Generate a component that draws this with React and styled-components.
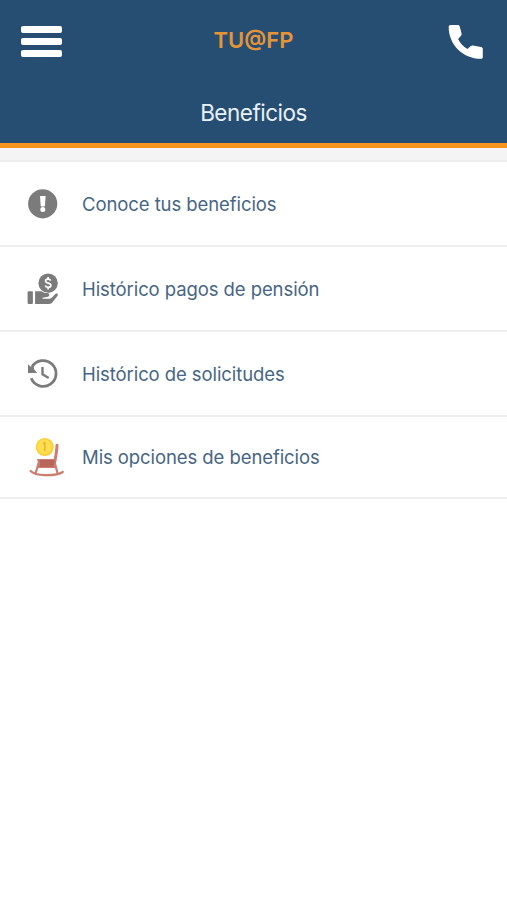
import React from "react";
import styled, { createGlobalStyle } from "styled-components";

const GlobalStyle = createGlobalStyle`
  * {
    box-sizing: border-box;
  }
  body {
    margin: 0;
    background-color: #fff;
    font-family: Inter, "Liberation Sans", sans-serif;
  }
`;

const Screen = styled.div`
  min-height: 100vh;
  background-color: #fff;
`;

const Header = styled.header`
  height: 148px;
  background-color: #264e72;
  border-bottom: 5px solid #f7931f;
`;

const TopBar = styled.div`
  height: 83px;
  display: grid;
  grid-template-columns: 64px 1fr 64px;
  align-items: center;
`;

const MenuButton = styled.button`
  display: flex;
  flex-direction: column;
  gap: 5px;
  width: 41px;
  margin-left: 21px;
  padding: 0;
  border: 0;
  background: none;

  & > span {
    width: 41px;
    height: 7px;
    border-radius: 2px;
    background-color: #fff;
  }
`;

const Brand = styled.div`
  color: #e79437;
  font-size: 22px;
  font-weight: 600;
  line-height: 28px;
  text-align: center;
  margin-top: -4px;
`;

const CallButton = styled.button`
  display: flex;
  margin-left: 1px;
  padding: 0;
  border: 0;
  background: none;

  & > svg {
    width: 44px;
    height: 44px;
  }
`;

const Title = styled.h1`
  margin: 0;
  padding-top: 15px;
  color: #eaf1f8;
  font-size: 22.5px;
  font-weight: 400;
  line-height: 30px;
  letter-spacing: -0.5px;
  text-align: center;
`;

const Spacer = styled.div`
  height: 14px;
  background-color: #f4f4f4;
  border-bottom: 2px solid #ededed;
`;

const Menu = styled.ul`
  list-style: none;
  margin: 0;
  padding: 0;
`;

const MenuItem = styled.li`
  display: flex;
  align-items: center;
  gap: 14px;
  height: ${(props) => props.$height}px;
  padding-left: 20px;
  border-bottom: 2px solid #eeeeee;
  color: #476584;
`;

const Icon = styled.svg`
  width: 48px;
  height: 48px;
  flex: none;
`;

const Label = styled.span`
  font-size: 18.5px;
  line-height: 24px;
  letter-spacing: -0.08px;
  white-space: nowrap;
`;

const PhoneIcon = () => (
  <svg viewBox="0 0 44 44">
    <path
      d="M6.6 5h7.2c1.1 0 1.7.5 1.9 1.6l1.9 7c.2.8 0 1.5-.6 2.1l-2.9 3.4c2.2 4.4 5 7.4 9.4 9.9l3.3-2.9c.7-.6 1.4-.8 2.3-.6l7.8 1.5c1.3.2 1.9.9 1.9 2.1v7.8c0 1.3-.7 1.9-2 1.9C18.6 38.8 4.7 24.5 4.7 7c0-1.3.6-2 1.9-2z"
      fill="#fff"
    />
  </svg>
);

const AlertIcon = () => (
  <Icon viewBox="0 0 48 48">
    <circle cx="22.7" cy="23.8" r="14.6" fill="#7b7b7b" />
    <path
      d="M20.5 16h4.6q.5 0 .5.6l-.7 9.2q-.1.6-.7.6h-2.8q-.6 0-.7-.6L20 16.6q0-.6.5-.6z"
      fill="#fff"
    />
    <circle cx="22.8" cy="29.4" r="2.5" fill="#fff" />
  </Icon>
);

const PaymentIcon = () => (
  <Icon viewBox="0 0 48 48">
    <g fill="#7b7b7b">
      <circle cx="28.1" cy="18.2" r="9.7" />
      <rect x="7.6" y="26.2" width="5.3" height="12.7" rx="1" />
      <path
        d="M15.1 26.2H20c1.5 0 2.5.5 3.7 1.3.7.5 1.3.6 2.1.6h1.5c1.5 0 2.1 1 2 2-.1.8-.6 1.3-1.3 1.6l-5.5 1v1h6.6c1.4 0 2.2-.6 3.1-1.5l3.1-3.1c.7-.7 1.6-.9 2.3-.3.5.5.3 1.4-.2 2.1l-4.5 5.9c-1.2 1.6-2.1 2.1-4 2.1H15.1z"
        stroke="#fff"
        strokeWidth="1"
        paintOrder="stroke"
      />
    </g>
    <path
      d="M30.6 15.6c-.4-1-1.3-1.5-2.5-1.5-1.5 0-2.5.7-2.5 1.9 0 2.8 5.3 1.5 5.3 4.3 0 1.2-1 2-2.7 2-1.5 0-2.6-.7-2.9-1.8M28.1 12v2M28.1 22.2v2.2"
      fill="none"
      stroke="#fff"
      strokeWidth="1.7"
    />
  </Icon>
);

const HistoryIcon = () => (
  <Icon viewBox="0 0 48 48">
    <g fill="none" stroke="#7b7b7b" strokeWidth="2.8">
      <path d="M11.2 28.3A12.9 12.9 0 1 0 12 17" />
      <path d="M22.5 17v7.3l6.2 3.8" strokeWidth="2.4" />
    </g>
    <path d="M8 14.3l3 2.8 2.3-1.1 1 3.6 2.8 3.3H8z" fill="#7b7b7b" />
  </Icon>
);

const RockingChairIcon = () => (
  <Icon viewBox="0 0 48 48">
    <g fill="none" stroke="#cc7d70" strokeLinecap="round">
      <path d="M37 12.3c-.2 6-1.4 12.5-2.6 18.5" strokeWidth="3" />
      <path d="M18 27h15.8" strokeWidth="2.2" />
      <path d="M19.3 27.5l-3.7 13M34.7 29.5l2.9 11" strokeWidth="2.2" />
      <path
        d="M10.6 38c2.8 2.7 6 3.9 13.4 4.1S38.5 42 42.8 39"
        strokeWidth="2.2"
      />
      <path d="M18 34h17" strokeWidth="1.8" />
    </g>
    <path d="M19.8 27h14.8l-.6 6.8H19z" fill="#b9665a" />
    <circle cx="24.8" cy="14" r="9.1" fill="#f9cf3c" />
    <circle cx="24.5" cy="13.8" r="7.2" fill="#ffdf4f" />
    <path
      d="M22.8 10.8l2-1.2v8.6"
      fill="none"
      stroke="#e8b736"
      strokeWidth="1.6"
    />
  </Icon>
);

const items = [
  { label: "Conoce tus beneficios", icon: AlertIcon, height: 85 },
  { label: "Histórico pagos de pensión", icon: PaymentIcon, height: 85 },
  { label: "Histórico de solicitudes", icon: HistoryIcon, height: 85 },
  { label: "Mis opciones de beneficios", icon: RockingChairIcon, height: 82 },
];

const App = () => {
  return (
    <Screen>
      <GlobalStyle />
      <Header>
        <TopBar>
          <MenuButton aria-label="Menú">
            <span />
            <span />
            <span />
          </MenuButton>
          <Brand>TU@FP</Brand>
          <CallButton aria-label="Llamar">
            <PhoneIcon />
          </CallButton>
        </TopBar>
        <Title>Beneficios</Title>
      </Header>
      <Spacer />
      <Menu>
        {items.map(({ label, icon: ItemIcon, height }) => (
          <MenuItem key={label} $height={height}>
            <ItemIcon />
            <Label>{label}</Label>
          </MenuItem>
        ))}
      </Menu>
    </Screen>
  );
};

export default App;
